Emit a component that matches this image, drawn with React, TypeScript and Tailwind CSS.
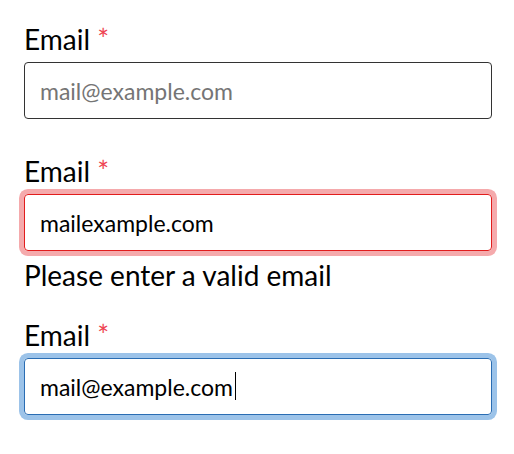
export default function App() {
  return (
    <div className="flex flex-col pl-6 pt-[22px] pb-[38px] w-[492px]" style={{ fontFamily: 'Lato, sans-serif' }}>
      <div className="flex flex-col">
        <label className="text-[28px] leading-[34px] text-black">
          Email <span className="text-[#ee4452]">*</span>
        </label>
        <input
          className="mt-[6px] h-[57px] rounded-[4px] border border-[#333] px-[15px] text-[23px] text-black placeholder:text-[#757575] outline-none"
          placeholder="mail@example.com"
        />
      </div>
      <div className="mt-[35px] flex flex-col">
        <label className="text-[28px] leading-[34px] text-black">
          Email <span className="text-[#ee4452]">*</span>
        </label>
        <input
          className="mt-[6px] h-[57px] rounded-[4px] border border-[#e11d1d] px-[15px] text-[23px] text-black outline-none ring-[5px] ring-[#f5aaac]"
          defaultValue="mailexample.com"
        />
        <p className="mt-[7px] text-[28px] leading-[34px] text-black">Please enter a valid email</p>
      </div>
      <div className="mt-[26px] flex flex-col">
        <label className="text-[28px] leading-[34px] text-black">
          Email <span className="text-[#ee4452]">*</span>
        </label>
        <div className="relative mt-[6px]">
          <input
            className="w-full h-[57px] rounded-[4px] border border-[#2a6db3] px-[15px] text-[23px] text-black caret-transparent outline-none ring-[5px] ring-[#9cc3e9]"
            defaultValue="mail@example.com"
          />
          {/* caret */}
          <span className="absolute left-[211px] top-[14px] h-[28px] w-px bg-black" />
        </div>
      </div>
    </div>
  );
}
